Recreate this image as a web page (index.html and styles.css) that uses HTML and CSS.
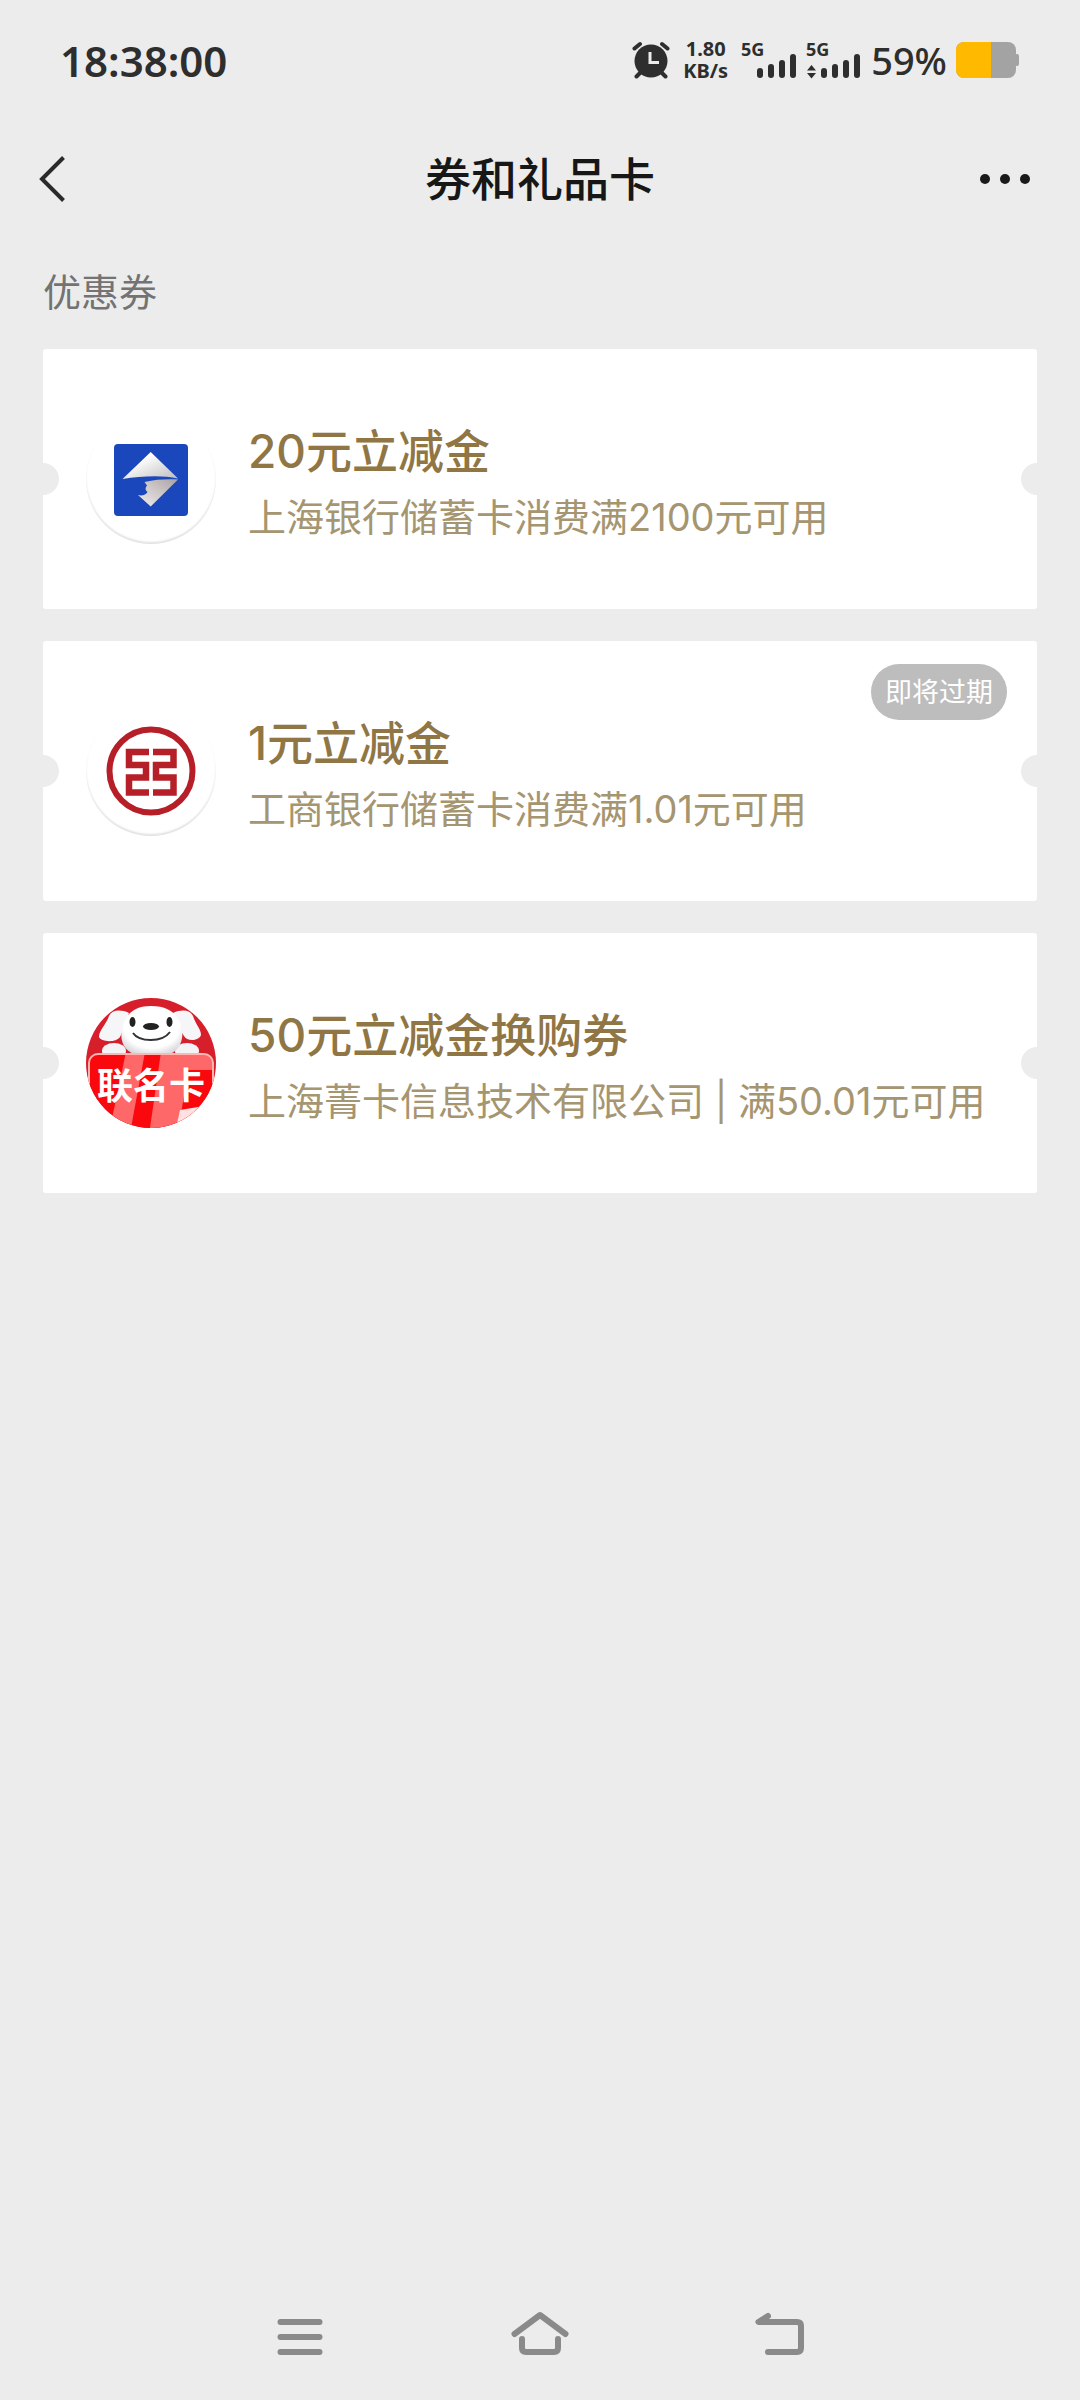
FILE: index.html
```html
<!DOCTYPE html>
<html lang="zh-CN">
<head>
  <meta charset="UTF-8">
  <meta name="viewport" content="width=device-width, initial-scale=1.0">
  <title>券和礼品卡</title>
  <link rel="stylesheet" href="styles.css">
</head>
<body>

<div class="status-bar">
  <span class="time">18:38:00</span>
  <div class="status-icons">
    <svg width="38" height="38" viewBox="0 0 38 38">
      <g stroke="#2e2e2e" stroke-width="4" stroke-linecap="round">
        <path d="M2.500 7.500L8 3M35.500 7.500L30 3M9 31L4.500 35.500M29 31L33.500 35.500"/>
      </g>
      <circle cx="19" cy="20" r="16.500" fill="#2e2e2e"/>
      <path d="M18 11V21.500H27" fill="none" stroke="#ececec" stroke-width="3"/>
    </svg>
    <div class="net-speed"><span>1.80</span><span>KB/s</span></div>
    <svg class="signal" width="56" height="38" viewBox="0 0 56 38">
      <text x="0" y="15">5G</text>
      <rect x="16" y="27" width="6" height="10" rx="3"/>
      <rect x="27" y="23" width="6" height="14" rx="3"/>
      <rect x="38" y="19" width="6" height="18" rx="3"/>
      <rect x="49" y="13" width="6" height="24" rx="3"/>
    </svg>
    <svg class="signal" width="56" height="38" viewBox="0 0 56 38">
      <text x="0" y="15">5G</text>
      <path d="M1 29.500L5.500 24L10 29.500ZM1 32L5.500 37.500L10 32Z"/>
      <rect x="15" y="27" width="6" height="10" rx="3"/>
      <rect x="26" y="23" width="6" height="14" rx="3"/>
      <rect x="37" y="19" width="6" height="18" rx="3"/>
      <rect x="48" y="13" width="6" height="24" rx="3"/>
    </svg>
    <span class="percent">59%</span>
    <svg width="64" height="38" viewBox="0 0 64 38">
      <rect x="58" y="13" width="5" height="12" rx="2" fill="#a3a3a3"/>
      <rect x="0" y="1" width="60" height="36" rx="8" fill="#a3a3a3"/>
      <path d="M8 1H35V37H8A8 8 0 0 1 0 29V9A8 8 0 0 1 8 1Z" fill="#ffba00"/>
    </svg>
  </div>
</div>

<header class="title-bar">
  <button type="button" aria-label="返回">
    <svg width="30" height="50" viewBox="0 0 30 50">
      <path d="M25.500 3.500L4 25L25.500 46.500" fill="none" stroke="#2a2a2a" stroke-width="4"/>
    </svg>
  </button>
  <h1>券和礼品卡</h1>
  <button type="button" class="more" aria-label="更多">
    <svg width="50" height="12" viewBox="0 0 50 12" fill="#1a1a1a">
      <circle cx="5" cy="6" r="5"/>
      <circle cx="25" cy="6" r="5"/>
      <circle cx="45" cy="6" r="5"/>
    </svg>
  </button>
</header>

<main>
  <h2>优惠券</h2>

  <ul class="coupon-list">
    <li>
      <a class="coupon" href="#">
        <span class="logo logo-white">
          <svg width="130" height="130" viewBox="0 0 130 130">
            <defs>
              <linearGradient id="silverTop" x1="0" y1="0" x2="1" y2="1">
                <stop offset="0.300" stop-color="#fff"/>
                <stop offset="1" stop-color="#bdbbbd"/>
              </linearGradient>
              <linearGradient id="silverBottom" x1="1" y1="0" x2="0" y2="1">
                <stop offset="0" stop-color="#a9a3a6"/>
                <stop offset="0.500" stop-color="#cfc9c9"/>
                <stop offset="1" stop-color="#eee"/>
              </linearGradient>
            </defs>
            <rect x="28" y="30" width="74" height="72" rx="4" fill="#1b47bd"/>
            <path d="M64.700 38L92 64.500C76 61 56 62 36.500 65Z" fill="url(#silverTop)"/>
            <path d="M92 65.500L64.700 92.500L52 81C56 82 60 81 61.500 78C59 76 59 74 61 71.500L58.500 68C70 65.500 80 65 92 65.500Z" fill="url(#silverBottom)"/>
          </svg>
        </span>
        <div class="info">
          <h3>20元立减金</h3>
          <p>上海银行储蓄卡消费满2100元可用</p>
        </div>
      </a>
    </li>
    <li>
      <a class="coupon" href="#">
        <span class="logo logo-white">
          <svg width="130" height="130" viewBox="0 0 130 130" fill="none" stroke="#b71f28">
            <circle cx="65" cy="65" r="41.500" stroke-width="6"/>
            <path d="M63 46H43V59H60V71.500H43V86.500H63M67 46H87.500V59H70V71.500H87.500V86.500H67" stroke-width="6.500"/>
          </svg>
        </span>
        <div class="info">
          <h3>1元立减金</h3>
          <p>工商银行储蓄卡消费满1.01元可用</p>
        </div>
        <span class="badge">即将过期</span>
      </a>
    </li>
    <li>
      <a class="coupon" href="#">
        <span class="logo">
          <svg width="130" height="130" viewBox="0 0 130 130">
            <defs>
              <clipPath id="round"><circle cx="65" cy="65" r="65"/></clipPath>
              <clipPath id="panel"><rect x="3" y="56" width="124" height="90" rx="9"/></clipPath>
              <radialGradient id="face" cx="0.500" cy="0.400" r="0.650">
                <stop offset="0.700" stop-color="#fff"/>
                <stop offset="1" stop-color="#d3d3da"/>
              </radialGradient>
            </defs>
            <g clip-path="url(#round)">
              <rect width="130" height="130" fill="#d71f2b"/>
              <ellipse cx="28" cy="53" rx="12" ry="8" fill="#f3f3f6"/>
              <ellipse cx="101" cy="53" rx="12" ry="8" fill="#f3f3f6"/>
              <!-- ears -->
              <path d="M43 15C34 11 26 12 23 18C20 27 13 32 13 39C15 44 30 45 34 39L38 30Z" fill="#f6f6f8"/>
              <path d="M87 15C96 11 104 12 107 18C110 27 115 31 115 37C113 43 101 44 98 38L93 30Z" fill="#f6f6f8"/>
              <path d="M65 8C47 8 39 17 36 31C33 45 40 55 52 57H80C92 55 98 44 96 31C93 17 84 8 65 8Z" fill="url(#face)"/>
              <ellipse cx="46.500" cy="24" rx="3" ry="5" fill="#222"/>
              <ellipse cx="83.500" cy="24" rx="3" ry="5" fill="#222"/>
              <ellipse cx="65" cy="28.500" rx="8" ry="3.500" fill="#222"/>
              <path d="M47 35C53 44 76 45 84 34" fill="none" stroke="#333" stroke-width="2"/>
              <!-- card held by the dog -->
              <g clip-path="url(#panel)">
                <rect y="54" width="130" height="80" fill="#f9090d"/>
                <path d="M40 54H59L45 130H24ZM75 54H130V72H102L96 110L90 130H64Z" fill="#ff6868"/>
                <path d="M94 112L130 106V130H90Z" fill="#ffe1e1"/>
              </g>
              <rect x="3" y="56" width="124" height="90" rx="9" fill="none" stroke="#ffb6b0" stroke-width="2"/>
              <text class="card-name" x="65" y="101" text-anchor="middle">联名卡</text>
            </g>
          </svg>
        </span>
        <div class="info">
          <h3>50元立减金换购券</h3>
          <p>上海菁卡信息技术有限公司 | 满50.01元可用</p>
        </div>
      </a>
    </li>
  </ul>
</main>

<nav class="nav-bar">
  <button type="button" aria-label="最近任务">
    <svg width="60" height="60" viewBox="0 0 60 60">
      <path d="M10.500 16H49.500M10.500 31H49.500M10.500 46H49.500"/>
    </svg>
  </button>
  <button type="button" aria-label="主页">
    <svg width="60" height="60" viewBox="0 0 60 60">
      <path d="M4.500 28L30 9L55.500 28M12 33V42Q12 46 16 46H44Q48 46 48 42V33"/>
    </svg>
  </button>
  <button type="button" aria-label="返回上一页">
    <svg width="60" height="60" viewBox="0 0 60 60">
      <path d="M18 10L8.500 16H47Q51 16 51 20V42Q51 46 47 46H18"/>
    </svg>
  </button>
</nav>

</body>
</html>
```
FILE: styles.css
```css
* {
  box-sizing: border-box;
}

body {
  margin: 0;
  min-height: 100vh;
  display: flex;
  flex-direction: column;
  background: #ececec;
  font-family: Inter, 'Noto Sans CJK SC', sans-serif;
}

h1, h2, h3, p, ul {
  margin: 0;
  padding: 0;
}

svg {
  display: block;
}

button {
  padding: 0;
  border: none;
  background: none;
  cursor: pointer;
}

.status-bar {
  display: flex;
  justify-content: space-between;
  align-items: center;
  height: 120px;
  padding: 0 60px;
  color: #2e2e2e;
  font-family: 'Noto Sans', sans-serif;
}

.time {
  font-size: 42px;
  font-weight: 600;
}

.status-icons {
  display: flex;
  align-items: center;
  gap: 9px;
}

.net-speed {
  display: flex;
  flex-direction: column;
  align-items: center;
  margin: 0 4px;
  font-size: 20px;
  font-weight: 700;
  line-height: 22px;
}

.signal {
  overflow: visible;
  fill: #2e2e2e;
  font-size: 18px;
  font-weight: 700;
}

.percent {
  font-size: 38px;
  font-weight: 500;
}

.title-bar {
  display: grid;
  grid-template-columns: 1fr auto 1fr;
  align-items: center;
  height: 118px;
  padding: 0 50px 0 38px;
}

.title-bar button {
  justify-self: start;
}

.title-bar .more {
  justify-self: end;
}

.title-bar h1 {
  padding-left: 12px;
  font-size: 46px;
  font-weight: 500;
  line-height: 60px;
  color: #171717;
}

main {
  padding: 24px 43px;
}

h2 {
  margin-bottom: 27px;
  font-size: 38px;
  font-weight: 400;
  line-height: 60px;
  color: #737373;
}

.coupon-list {
  display: flex;
  flex-direction: column;
  gap: 32px;
  list-style: none;
}

.coupon {
  position: relative;
  display: flex;
  align-items: center;
  gap: 32px;
  min-height: 260px;
  padding: 0 43px;
  border-radius: 3px;
  background: #fff;
  text-decoration: none;
}

/* ticket notches on both sides */
.coupon::before,
.coupon::after {
  content: "";
  position: absolute;
  top: 50%;
  width: 32px;
  height: 32px;
  margin-top: -16px;
  border-radius: 50%;
  background: #ececec;
}

.coupon::before {
  left: -16px;
}

.coupon::after {
  right: -16px;
}

.logo {
  flex: none;
  border-radius: 50%;
}

.logo-white {
  box-shadow: inset 0 -2px 2px #e2e2e2;
}

.info {
  padding-top: 8px;
}

.info h3 {
  font-size: 46px;
  font-weight: 500;
  line-height: 68px;
  color: #8f7644;
}

.info p {
  font-size: 38px;
  line-height: 64px;
  color: #a59570;
}

.badge {
  position: absolute;
  top: 23px;
  right: 30px;
  padding: 2px 14px 0;
  border-radius: 28px;
  background: #bdbdbd;
  color: #fff;
  font-size: 27px;
  line-height: 54px;
}

.card-name {
  font-size: 36px;
  font-weight: 700;
  fill: #fff;
}

.nav-bar {
  display: flex;
  height: 128px;
  margin-top: auto;
  padding: 0 180px;
}

.nav-bar button {
  flex: 1;
  display: flex;
  justify-content: center;
  align-items: center;
}

.nav-bar path {
  fill: none;
  stroke: #8a8a8a;
  stroke-width: 6;
  stroke-linecap: round;
  stroke-linejoin: round;
}
```
